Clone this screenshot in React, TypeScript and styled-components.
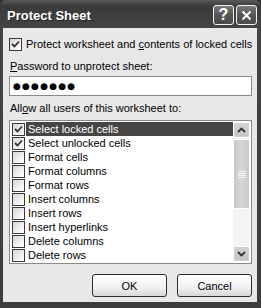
import React from 'react'
import styled, { createGlobalStyle } from 'styled-components'

const GlobalStyle = createGlobalStyle`
  html, body {
    margin: 0;
    padding: 0;
    background: #2e2e2e;
  }
  body {
    font-family: "Liberation Sans", Arial, sans-serif;
    font-size: 11px;
    color: #000;
  }
`

const Frame = styled.div`
  width: 261px;
  height: 308px;
  box-sizing: border-box;
  display: flex;
  flex-direction: column;
  background: linear-gradient(180deg, #5a5a5a 0px, #3a3a3a 6px, #444 28px, #3c3c3c 100%);
  border-radius: 6px 6px 0 0;
  padding: 0 4px 6px 3px;
  overflow: hidden;
`

const TitleBar = styled.div`
  height: 28px;
  display: flex;
  align-items: center;
  justify-content: space-between;
  padding: 0 0 0 4px;
  flex-shrink: 0;
`

const Title = styled.span`
  color: #fff;
  font-weight: bold;
  font-size: 13px;
  text-shadow: 1px 1px 0 #222;
  margin-top: 2px;
`

const TitleButtons = styled.div`
  display: flex;
  gap: 2px;
  margin-top: 2px;
`

const TitleButton = styled.div`
  width: 21px;
  height: 20px;
  box-sizing: border-box;
  border: 1px solid #f2f2f2;
  border-radius: 3px;
  background: linear-gradient(180deg, #7a7a7a 0%, #555 50%, #4a4a4a 100%);
  display: flex;
  align-items: center;
  justify-content: center;
  color: #fff;
  font-weight: bold;
  font-size: 16px;
`

const Body = styled.div`
  flex: 1;
  background: #e8e8e8;
  display: flex;
  flex-direction: column;
  padding: 9px 5px 0 6px;
`

const CheckRow = styled.label`
  display: flex;
  align-items: center;
  gap: 4px;
  height: 14px;
  white-space: nowrap;
`

const Box = styled.span<{ $checked?: boolean }>`
  width: 13px;
  height: 13px;
  box-sizing: border-box;
  flex-shrink: 0;
  border: 1px solid #3a3a3a;
  background: linear-gradient(135deg, #d6d6d6 0%, #f4f4f4 70%, #fff 100%);
  display: flex;
  align-items: center;
  justify-content: center;
`

const U = styled.span`
  text-decoration: underline;
`

const FieldLabel = styled.div<{ $top: number }>`
  margin-top: ${p => p.$top}px;
  height: 13px;
  line-height: 13px;
  padding-left: 1px;
`

const PasswordBox = styled.div`
  margin-top: 3px;
  height: 20px;
  box-sizing: border-box;
  border: 1px solid #8a8a8a;
  background: #fff;
  display: flex;
  align-items: center;
  padding-left: 3px;
  font-family: "DejaVu Sans", sans-serif;
  font-size: 9px;
  letter-spacing: 1.2px;
`

const ListBox = styled.div`
  margin-top: 5px;
  height: 144px;
  box-sizing: border-box;
  border: 1px solid #8a8a8a;
  background: #fff;
  display: flex;
  padding: 1px 1px 1px 2px;
`

const Rows = styled.div`
  flex: 1;
  display: flex;
  flex-direction: column;
`

const Row = styled.div`
  height: 14px;
  display: flex;
  align-items: center;
`

const RowText = styled.span<{ $selected?: boolean }>`
  flex: 1;
  height: 14px;
  line-height: 14px;
  margin-left: 1px;
  padding-left: 2px;
  background: ${p => (p.$selected ? '#454545' : 'transparent')};
  color: ${p => (p.$selected ? '#fff' : '#000')};
  white-space: nowrap;
`

const ScrollBar = styled.div`
  width: 17px;
  display: flex;
  flex-direction: column;
  background: #f4f4f4;
  gap: 1px;
`

const ScrollBtn = styled.div`
  height: 16px;
  box-sizing: border-box;
  border: 1px solid #fff;
  border-radius: 2px;
  background: linear-gradient(180deg, #d4d4d4 0%, #c4c4c4 100%);
  box-shadow: 0 0 0 1px #d0d0d0 inset;
  display: flex;
  align-items: center;
  justify-content: center;
`

const Thumb = styled.div`
  height: 70px;
  box-sizing: border-box;
  border: 1px solid #fff;
  border-radius: 2px;
  background: linear-gradient(90deg, #c8c8c8 0%, #d6d6d6 50%, #c8c8c8 100%);
  display: flex;
  align-items: center;
  justify-content: center;
`

const Track = styled.div`
  flex: 1;
`

const ButtonRow = styled.div`
  margin-top: auto;
  margin-bottom: 5px;
  display: flex;
  justify-content: flex-end;
  gap: 10px;
`

const Button = styled.button`
  width: 75px;
  height: 23px;
  box-sizing: border-box;
  border: 1px solid #2a2a2a;
  border-radius: 3px;
  background: linear-gradient(180deg, #fff 0%, #f0f0f0 60%, #d8d8d8 100%);
  font-family: "Liberation Sans", Arial, sans-serif;
  font-size: 11px;
  color: #000;
  padding: 0;
`

const Tick = () => (
  <svg width="9" height="9" viewBox="0 0 9 9">
    <path d="M1 4 L3.5 6.5 L8 1.5" stroke="#333" strokeWidth="1.8" fill="none" />
  </svg>
)

const Chevron = ({ up }: { up?: boolean }) => (
  <svg width="9" height="6" viewBox="0 0 9 6">
    <path d={up ? 'M1 5 L4.5 1.5 L8 5' : 'M1 1 L4.5 4.5 L8 1'} stroke="#333" strokeWidth="1.8" fill="none" />
  </svg>
)

const Grip = () => (
  <svg width="8" height="7" viewBox="0 0 8 7">
    {[0.5, 2.5, 4.5, 6.5].map(y => (
      <line key={y} x1="0" y1={y} x2="8" y2={y} stroke="#f8f8f8" strokeWidth="1" />
    ))}
  </svg>
)

const permissions = [
  { label: 'Select locked cells', checked: true, selected: true },
  { label: 'Select unlocked cells', checked: true },
  { label: 'Format cells' },
  { label: 'Format columns' },
  { label: 'Format rows' },
  { label: 'Insert columns' },
  { label: 'Insert rows' },
  { label: 'Insert hyperlinks' },
  { label: 'Delete columns' },
  { label: 'Delete rows' },
]

export default function App() {
  return (
    <>
      <GlobalStyle />
      <Frame>
        <TitleBar>
          <Title>Protect Sheet</Title>
          <TitleButtons>
            <TitleButton>?</TitleButton>
            <TitleButton>
              <svg width="11" height="11" viewBox="0 0 11 11">
                <path d="M1.5 1.5 L9.5 9.5 M9.5 1.5 L1.5 9.5" stroke="#fff" strokeWidth="2" />
              </svg>
            </TitleButton>
          </TitleButtons>
        </TitleBar>

        <Body>
          <CheckRow>
            <Box $checked><Tick /></Box>
            <span>Protect worksheet and <U>c</U>ontents of locked cells</span>
          </CheckRow>

          <FieldLabel $top={9}><U>P</U>assword to unprotect sheet:</FieldLabel>
          <PasswordBox>●●●●●●●</PasswordBox>

          <FieldLabel $top={6}>All<U>o</U>w all users of this worksheet to:</FieldLabel>
          <ListBox>
            <Rows>
              {permissions.map(p => (
                <Row key={p.label}>
                  <Box $checked={p.checked}>{p.checked && <Tick />}</Box>
                  <RowText $selected={p.selected}>{p.label}</RowText>
                </Row>
              ))}
            </Rows>
            <ScrollBar>
              <ScrollBtn><Chevron up /></ScrollBtn>
              <Thumb><Grip /></Thumb>
              <Track />
              <ScrollBtn><Chevron /></ScrollBtn>
            </ScrollBar>
          </ListBox>

          <ButtonRow>
            <Button>OK</Button>
            <Button>Cancel</Button>
          </ButtonRow>
        </Body>
      </Frame>
    </>
  )
}
